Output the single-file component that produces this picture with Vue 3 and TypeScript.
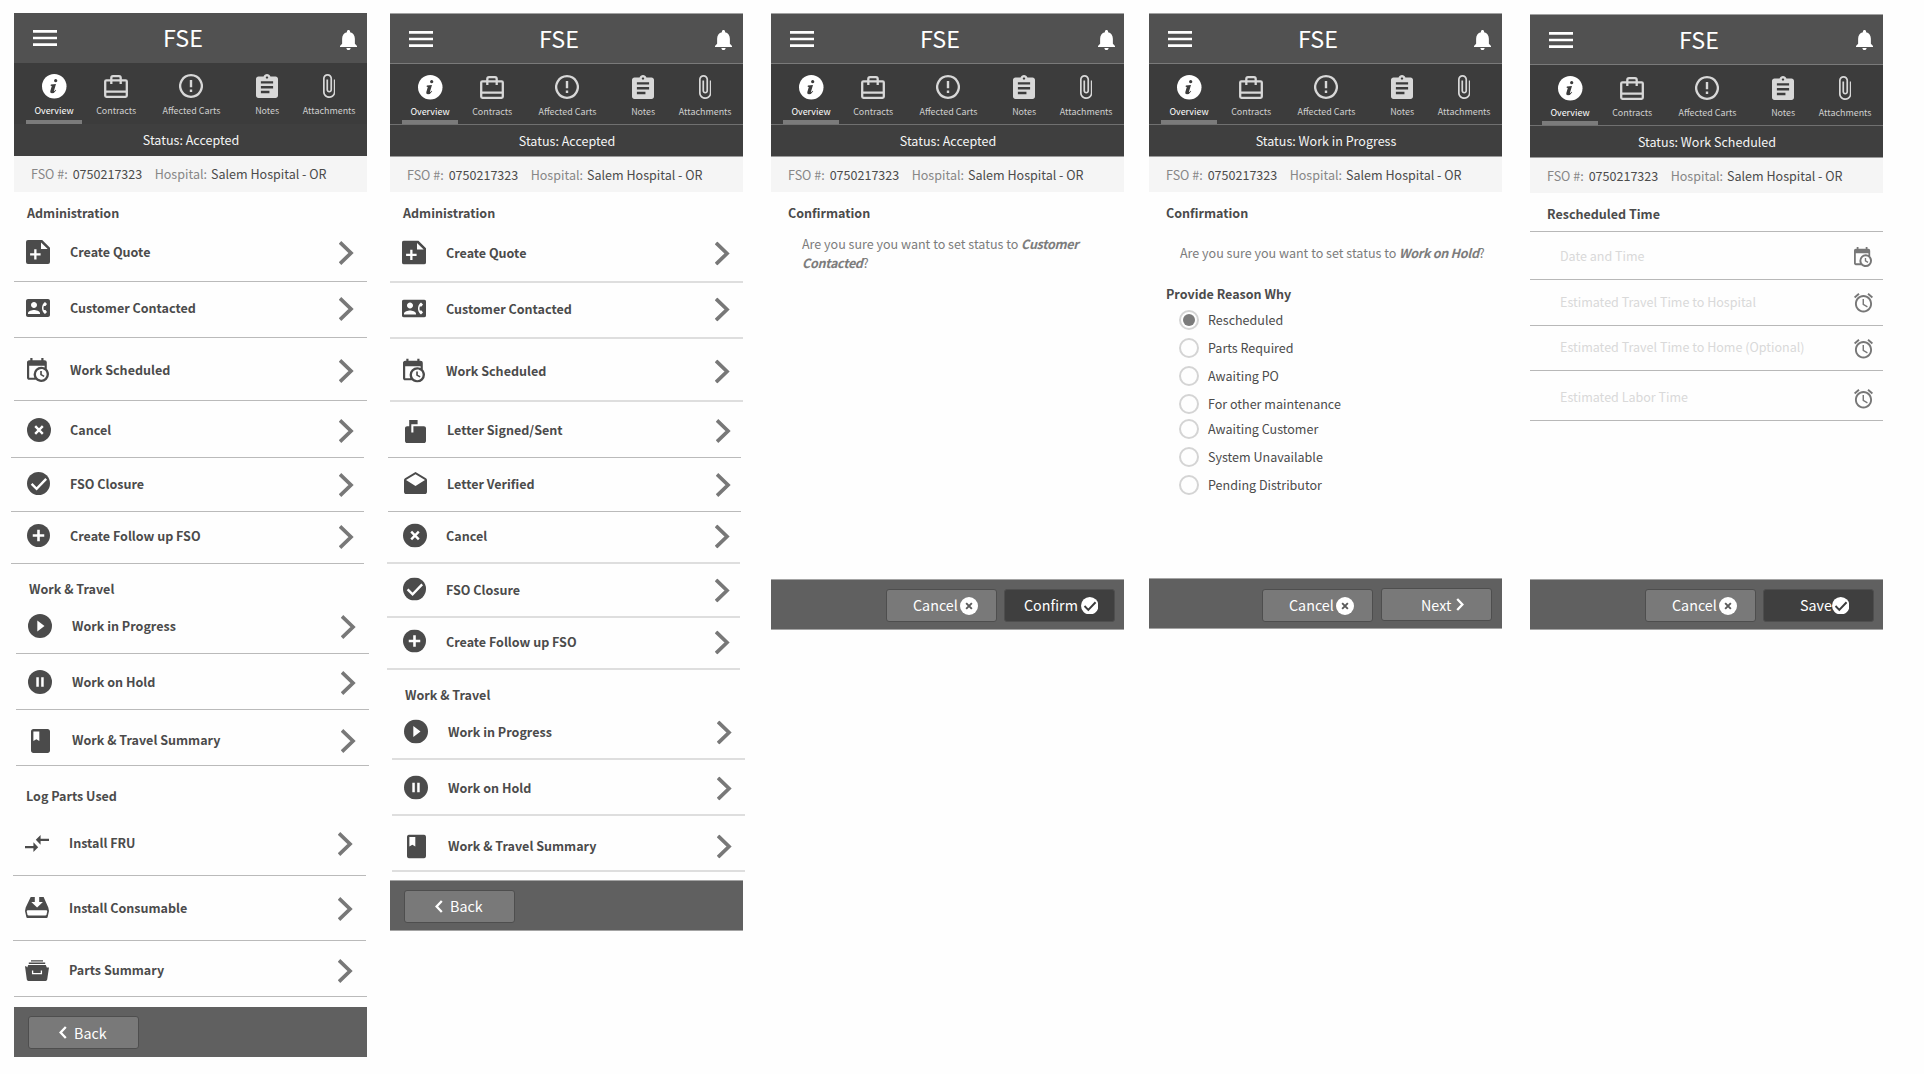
<script setup lang="ts">
interface Shape { d: string; f?: string; s?: string; w?: number }
interface Glyph { box: string; w: number; h: number; shapes: Shape[] }
interface Row {
  icon: string; label: string
  x: number; ix: number; iy: number
  pt: number; pb: number
  line: number; crisp?: boolean
}
interface Group { title: string; tx: number; ty: number; th: number; rows: Row[] }
interface Button {
  label: string; icon: string; side: 'left' | 'right'; dark?: boolean
  left: number; pad: number; gap: number; drop?: number; low?: boolean
}
interface Screen {
  kind: 'menu' | 'confirm' | 'reason' | 'form'
  gap: number; top: number; bell: number; sharp?: boolean
  status: string; bodyHeight: number
  groups?: Group[]; buttons: Button[]
}

const ink = '#4b4b4b'
const disc = 'M12 0a12 12 0 1 0 0 24a12 12 0 1 0 0-24z'

const glyphs: Record<string, Glyph> = {
  menu: { box: '0 0 24 16', w: 24, h: 16, shapes: [{ d: 'M0 0h24v2.7H0zM0 6.65h24v2.7H0zM0 13.3h24V16H0z', f: '#fff' }] },
  bell: { box: '4 2.5 16 19.5', w: 17, h: 20, shapes: [{ d: 'M12 22c1.1 0 2-.9 2-2h-4c0 1.1.89 2 2 2zm6-6v-5c0-3.07-1.64-5.64-4.5-6.32V4c0-.83-.67-1.5-1.5-1.5s-1.5.67-1.5 1.5v.68C7.63 5.36 6 7.92 6 11v5l-2 2v1h16v-1l-2-2z', f: '#fff' }] },
  info: { box: '0 0 24 24', w: 24.5, h: 24.5, shapes: [
    { d: disc, f: '#fff' },
    { d: 'M13.4 5a1.6 1.6 0 1 0 .01 0zM8.7 10.4l5-.7-2.1 7.1q.9-.1 1.8-1.3l.5.4q-1.8 3-4.2 3-2 0-1.6-2l1.5-5.2-1.2-.3z', f: '#3c3c3c' }] },
  contracts: { box: '0 0 24 23', w: 24, h: 23, shapes: [
    { d: 'M2.4 5.4H21.6Q22.8 5.4 22.8 6.6V20.6Q22.8 21.8 21.6 21.8H2.4Q1.2 21.8 1.2 20.6V6.6Q1.2 5.4 2.4 5.4zM1.2 16.6H22.8M7.3 9V3Q7.3 1.2 9 1.2H15Q16.7 1.2 16.7 3V9', s: '#d8d8d8', w: 2.3 }] },
  alert: { box: '0 0 24 24', w: 24, h: 24, shapes: [
    { d: 'M12 1.2a10.8 10.8 0 1 0 .01 0z', s: '#d8d8d8', w: 2.3 },
    { d: 'M10.8 6h2.4v7.2h-2.4zM10.8 15.6h2.4V18h-2.4z', f: '#d8d8d8' }] },
  notes: { box: '3 1 18 20', w: 22, h: 24, shapes: [{ d: 'M19 3h-4.18C14.4 1.84 13.3 1 12 1c-1.3 0-2.4.84-2.82 2H5c-1.1 0-2 .9-2 2v14c0 1.1.9 2 2 2h14c1.1 0 2-.9 2-2V5c0-1.1-.9-2-2-2zm-7 0c.55 0 1 .45 1 1s-.45 1-1 1-1-.45-1-1 .45-1 1-1zm2 14H7v-2h7v2zm3-4H7v-2h10v2zm0-4H7V7h10v2z', f: '#d8d8d8' }] },
  clip: { box: '7 1 11 22', w: 12.5, h: 24, shapes: [{ d: 'M16.5 6v11.5c0 2.21-1.79 4-4 4s-4-1.79-4-4V5c0-1.38 1.12-2.5 2.5-2.5s2.5 1.12 2.5 2.5v10.5c0 .55-.45 1-1 1s-1-.45-1-1V6H10v9.5c0 1.38 1.12 2.5 2.5 2.5s2.5-1.12 2.5-2.5V5c0-2.21-1.79-4-4-4S7 2.79 7 5v12.5c0 3.04 2.46 5.5 5.5 5.5s5.5-2.46 5.5-5.5V6h-1.5z', f: '#d8d8d8' }] },
  quote: { box: '0 0 24 24', w: 24, h: 24, shapes: [{ d: 'M2 0H16.2L24 7.8V22q0 2-2 2H2q-2 0-2-2V2q0-2 2-2zM15 2.4V9h6.7zM8.2 9.2V13.2H4.1V15.5H8.2V19.6H10.5V15.5H14.6V13.2H10.5V9.2z', f: ink }] },
  contact: { box: '0 3 24 18', w: 24, h: 18, shapes: [{ d: 'M22 3H2C.9 3 0 3.9 0 5v14c0 1.1.9 2 2 2h20c1.1 0 1.99-.9 1.99-2L24 5c0-1.1-.9-2-2-2zM8 6c1.66 0 3 1.34 3 3s-1.34 3-3 3-3-1.34-3-3 1.34-3 3-3zm6 12H2v-1c0-2 4-3.1 6-3.1s6 1.1 6 3.1v1zm3.85-4h1.64L21 16l-1.99 1.99c-1.31-.98-2.28-2.38-2.73-3.99-.18-.64-.28-1.31-.28-2s.1-1.36.28-2c.45-1.62 1.42-3.01 2.73-3.99L21 8l-1.51 2h-1.64c-.22.63-.35 1.3-.35 2s.13 1.37.35 2z', f: ink }] },
  schedule: { box: '3 1 20 22', w: 22, h: 24, shapes: [{ d: 'M15,13H16.5V15.82L18.94,17.23L18.19,18.53L15,16.69V13M19,8H5V19H9.67C9.24,18.09 9,17.07 9,16A7,7 0 0,1 16,9C17.07,9 18.09,9.24 19,9.67V8M5,21C3.89,21 3,20.1 3,19V5C3,3.89 3.89,3 5,3H6V1H8V3H16V1H18V3H19A2,2 0 0,1 21,5V11.1C22.24,12.36 23,14.09 23,16A7,7 0 0,1 16,23C14.09,23 12.36,22.24 11.1,21H5M16,11.15A4.85,4.85 0 0,0 11.15,16C11.15,18.68 13.32,20.85 16,20.85A4.85,4.85 0 0,0 20.85,16C20.85,13.32 18.68,11.15 16,11.15Z', f: 'currentColor' }] },
  cancel: { box: '0 0 24 24', w: 24, h: 24, shapes: [{ d: disc, f: ink }, { d: 'M8.2 8.2l7.6 7.6M15.8 8.2l-7.6 7.6', s: '#fff', w: 2.4 }] },
  check: { box: '0 0 24 24', w: 23, h: 23, shapes: [{ d: disc, f: ink }, { d: 'M4.8 12.4l5.2 5.2L20 7.2', s: '#fff', w: 2.5 }] },
  plus: { box: '0 0 24 24', w: 23, h: 23, shapes: [{ d: disc, f: ink }, { d: 'M6 12h12M12 6v12', s: '#fff', w: 2.7 }] },
  play: { box: '0 0 24 24', w: 24, h: 24, shapes: [{ d: disc, f: ink }, { d: 'M9.3 6.6v10.8l7.2-5.4z', f: '#fff' }] },
  pause: { box: '0 0 24 24', w: 24, h: 24, shapes: [{ d: disc, f: ink }, { d: 'M8.3 7.2h2.5v9.6H8.3zM13.2 7.2h2.5v9.6h-2.5z', f: '#fff' }] },
  book: { box: '4 2 16 20', w: 19, h: 24, shapes: [{ d: 'M18 2H6c-1.1 0-2 .9-2 2v16c0 1.1.9 2 2 2h12c1.1 0 2-.9 2-2V4c0-1.1-.9-2-2-2zM6 4h5v8l-2.5-1.5L6 12V4z', f: ink }] },
  compare: { box: '2 5 20 14', w: 24, h: 17, shapes: [{ d: 'M9.01 14H2v2h7.01v3L13 15l-3.99-4v3zm5.98-1v-3H22V8h-7.01V5L11 9l3.99 4z', f: ink }] },
  consumable: { box: '0 0 24 21', w: 24, h: 21, shapes: [
    { d: 'M5.7 0H9.8V4.9H6.3L12.1 10.6 17.9 4.9H14.2V0H18.6L23.3 10.5 24 14 22.6 20.2Q22.4 21 21.6 21H2.4Q1.6 21 1.4 20.2L0 14 .7 10.5z', f: ink },
    { d: 'M3 13.2H21Q22.4 13.2 22.2 14.6L21.6 17.2Q21.3 18.4 20.2 18.4H3.8Q2.7 18.4 2.4 17.2L1.8 14.6Q1.6 13.2 3 13.2z', f: '#fff' }] },
  parts: { box: '0 0 24 21', w: 24, h: 21, shapes: [
    { d: 'M6 .2H18V1.6H6zM3.8 2.6H20.2V4H3.8zM2.2 7.4L3.2 5H20.8L21.8 7.4H24L22.2 19.6Q22 21 20.6 21H3.4Q2 21 1.8 19.6L0 6.2H1.2z', f: ink },
    { d: 'M7.6 10.4V13.6H16.4V10.4', s: '#fff', w: 1.3 }] },
  mailbox: { box: '2 0 20 22', w: 21, h: 23, shapes: [{ d: 'M20 6H10v6H8V4h6V0H6v6H4c-1.1 0-2 .9-2 2v12c0 1.1.9 2 2 2h16c1.1 0 2-.9 2-2V8c0-1.1-.9-2-2-2z', f: ink }] },
  drafts: { box: '2 1 20 19', w: 23, h: 22, shapes: [{ d: 'M21.99 8c0-.72-.37-1.35-.94-1.7L12 1 2.95 6.3C2.38 6.65 2 7.28 2 8v10c0 1.1.9 2 2 2h16c1.1 0 2-.9 2-2l-.01-10zM12 13L3.74 7.84 12 3l8.26 4.84L12 13z', f: ink }] },
  next: { box: '0 0 15 24', w: 15, h: 24, shapes: [{ d: 'M1 1.4L12 12 1 22.6', s: '#787878', w: 3.7 }] },
  alarm: { box: '2 1.86 20 20.14', w: 19.5, h: 20, shapes: [{ d: 'M22 5.72l-4.6-3.86-1.29 1.53 4.6 3.86L22 5.72zM7.88 3.39L6.6 1.86 2 5.71l1.29 1.53 4.59-3.85zM12.5 8H11v6l4.75 2.85.75-1.23-4-2.37V8zM12 4c-4.97 0-9 4.03-9 9s4.02 9 9 9c4.97 0 9-4.03 9-9s-4.03-9-9-9zm0 16c-3.87 0-7-3.13-7-7s3.13-7 7-7 7 3.13 7 7-3.13 7-7 7z', f: '#777' }] },
  btnBack: { box: '0 0 8 13', w: 8, h: 13, shapes: [{ d: 'M6.8 1L1.6 6.5 6.8 12', s: '#fff', w: 2.3 }] },
  btnNext: { box: '0 0 8 13', w: 8, h: 13, shapes: [{ d: 'M1.2 1L6.4 6.5 1.2 12', s: '#fff', w: 2.3 }] },
  btnCancel: { box: '0 0 24 24', w: 18, h: 18, shapes: [{ d: disc, f: '#fff' }, { d: 'M8.2 8.2l7.6 7.6M15.8 8.2l-7.6 7.6', s: '#5a5a5a', w: 2.6 }] },
  btnCheck: { box: '0 0 24 24', w: 17.5, h: 17.5, shapes: [{ d: disc, f: '#fff' }, { d: 'M4.8 12.4l5.2 5.2L20 7.2', s: '#3c3c3c', w: 2.7 }] },
}

const tabs = [
  { label: 'Overview', icon: 'info', center: 39.8, iy: 11 },
  { label: 'Contracts', icon: 'contracts', center: 102, iy: 12 },
  { label: 'Affected Carts', icon: 'alert', center: 177.3, iy: 11 },
  { label: 'Notes', icon: 'notes', center: 253, iy: 11 },
  { label: 'Attachments', icon: 'clip', center: 315, iy: 11 },
]

const row = (icon: string, label: string, x: number, ix: number, iy: number, pt: number, pb: number, line: number, crisp = false): Row =>
  ({ icon, label, x, ix, iy, pt, pb, line, crisp })

const screens: Screen[] = [
  {
    kind: 'menu', gap: 14, top: 13, bell: 326, sharp: true, status: 'Accepted', bodyHeight: 815,
    groups: [
      { title: 'Administration', tx: 13, ty: 21, th: 40, rows: [
        row('quote', 'Create Quote', 56, 12, -1, 9, 16, 0),
        row('contact', 'Customer Contacted', 56, 12, 2, 15, 16, 0),
        row('schedule', 'Work Scheduled', 56, 13, -1, 21, 17, 0),
        row('cancel', 'Cancel', 56, 13, -1, 18, 14, -3),
        row('check', 'FSO Closure', 56, 13, -1, 15, 14, -3),
        row('plus', 'Create Follow up FSO', 56, 13, -1, 13, 14, -3),
      ] },
      { title: 'Work & Travel', tx: 15, ty: 25, th: 41, rows: [
        row('play', 'Work in Progress', 58, 14, -1, 10, 14, 2),
        row('pause', 'Work on Hold', 58, 14, -1, 17, 14, 2),
        row('book', 'Work & Travel Summary', 58, 17, 0, 19, 12, 2),
      ] },
      { title: 'Log Parts Used', tx: 12, ty: 30, th: 56, rows: [
        row('compare', 'Install FRU', 55, 11, 3, 10, 19, -1),
        row('consumable', 'Install Consumable', 55, 11, 0, 21, 19, -1),
        row('parts', 'Parts Summary', 55, 11, 1, 18, 13, 0),
      ] },
    ],
    buttons: [{ label: 'Back', icon: 'btnBack', side: 'left', left: 14, pad: 30, gap: 7, low: true }],
  },
  {
    kind: 'menu', gap: 23, top: 13, bell: 325, status: 'Accepted', bodyHeight: 688,
    groups: [
      { title: 'Administration', tx: 13, ty: 21, th: 40, rows: [
        row('quote', 'Create Quote', 56, 12, -1, 9, 16, 0),
        row('contact', 'Customer Contacted', 56, 12, 2, 14, 16, 0),
        row('schedule', 'Work Scheduled', 56, 13, -1, 20, 17, 0),
        row('mailbox', 'Letter Signed/Sent', 57, 15, 1, 17, 14, -2, true),
        row('drafts', 'Letter Verified', 57, 14, -1, 15, 14, -2, true),
        row('cancel', 'Cancel', 56, 13, -1, 12, 14, -3),
        row('check', 'FSO Closure', 56, 13, -1, 14, 14, -3),
        row('plus', 'Create Follow up FSO', 56, 13, -1, 12, 14, -3),
      ] },
      { title: 'Work & Travel', tx: 15, ty: 25, th: 40, rows: [
        row('play', 'Work in Progress', 58, 14, -1, 10, 14, 2),
        row('pause', 'Work on Hold', 58, 14, -1, 16, 14, 2),
        row('book', 'Work & Travel Summary', 58, 17, 0, 18, 12, 2),
      ] },
    ],
    buttons: [{ label: 'Back', icon: 'btnBack', side: 'left', left: 14, pad: 30, gap: 7 }],
  },
  {
    kind: 'confirm', gap: 28, top: 13, bell: 327, status: 'Accepted', bodyHeight: 387,
    buttons: [
      { label: 'Cancel', icon: 'btnCancel', side: 'right', left: 115, pad: 26, gap: 2 },
      { label: 'Confirm', icon: 'btnCheck', side: 'right', dark: true, left: 7, pad: 19, gap: 3 },
    ],
  },
  {
    kind: 'reason', gap: 25, top: 13, bell: 325, status: 'Work in Progress', bodyHeight: 386,
    buttons: [
      { label: 'Cancel', icon: 'btnCancel', side: 'right', left: 113, pad: 26, gap: 2, drop: 1 },
      { label: 'Next', icon: 'btnNext', side: 'right', left: 8, pad: 39, gap: 5, low: true },
    ],
  },
  {
    kind: 'form', gap: 28, top: 14, bell: 326, status: 'Work Scheduled', bodyHeight: 386,
    buttons: [
      { label: 'Cancel', icon: 'btnCancel', side: 'right', left: 115, pad: 26, gap: 2 },
      { label: 'Save', icon: 'btnCheck', side: 'right', dark: true, left: 7, pad: 36, gap: 0 },
    ],
  },
]

const reasons = [
  { label: 'Rescheduled', h: 28 },
  { label: 'Parts Required', h: 28 },
  { label: 'Awaiting PO', h: 28 },
  { label: 'For other maintenance', h: 25 },
  { label: 'Awaiting Customer', h: 28 },
  { label: 'System Unavailable', h: 28 },
  { label: 'Pending Distributor', h: 28 },
]

const fields = [
  { label: 'Date and Time', icon: 'schedule', h: 48, ty: 15, iy: 15 },
  { label: 'Estimated Travel Time to Hospital', icon: 'alarm', h: 46, ty: 13, iy: 13 },
  { label: 'Estimated Travel Time to Home (Optional)', icon: 'alarm', h: 45, ty: 12, iy: 13 },
  { label: 'Estimated Labor Time', icon: 'alarm', h: 50, ty: 17, iy: 18 },
]

const px = (n: number) => `${n}px`
</script>

<template>
  <main class="board">
    <section
      v-for="(s, i) in screens"
      :key="i"
      class="screen"
      :class="{ soft: !s.sharp }"
      :style="{ marginLeft: px(s.gap), marginTop: px(s.top) }"
    >
      <header class="bar">
        <svg class="menu" :viewBox="glyphs.menu.box" width="24" height="16">
          <path :d="glyphs.menu.shapes[0].d" fill="#fff" />
        </svg>
        <h1 class="title">FSE</h1>
        <svg
          class="bell"
          :style="{ marginRight: px(336 - s.bell), marginTop: px(30 - s.top - (s.sharp ? 0 : 1)) }"
          :viewBox="glyphs.bell.box"
          width="17"
          height="20"
          preserveAspectRatio="none"
        >
          <path :d="glyphs.bell.shapes[0].d" fill="#fff" />
        </svg>
      </header>

      <nav class="tabs">
        <div
          v-for="(t, ti) in tabs"
          :key="t.label"
          class="tab"
          :class="{ active: ti === 0 }"
          :style="{ width: px(ti === 0 ? 56 : 60), marginLeft: px(ti === 0 ? 12 : t.center - tabs[ti - 1].center - (ti === 1 ? 58 : 60)) }"
        >
          <svg
            :viewBox="glyphs[t.icon].box"
            :width="glyphs[t.icon].w"
            :height="glyphs[t.icon].h"
            :style="{ marginTop: px(t.iy) }"
            preserveAspectRatio="none"
          >
            <path v-for="(p, k) in glyphs[t.icon].shapes" :key="k" :d="p.d" :fill="p.f ?? 'none'" :stroke="p.s ?? 'none'" :stroke-width="p.w" fill-rule="evenodd" />
          </svg>
          <span>{{ t.label }}</span>
        </div>
      </nav>

      <div class="status">Status: {{ s.status }}</div>

      <dl class="info">
        <dt>FSO #:</dt>
        <dd class="number">0750217323</dd>
        <dt>Hospital:</dt>
        <dd class="place">Salem Hospital - OR</dd>
      </dl>

      <div class="body" :style="{ height: px(s.bodyHeight) }">
        <template v-if="s.kind === 'menu'">
          <div v-for="g in s.groups" :key="g.title" class="group">
            <h2 class="heading" :style="{ height: px(g.th), paddingTop: px(g.ty - 9), paddingLeft: px(g.tx) }">{{ g.title }}</h2>
            <div
              v-for="r in g.rows"
              :key="r.label"
              class="row"
              :class="{ crisp: r.crisp }"
              :style="{ paddingTop: px(r.pt), paddingBottom: px(r.pb), marginLeft: px(r.line) }"
            >
              <div class="icon" :style="{ width: px(r.x - r.ix), marginLeft: px(r.ix - r.line), marginTop: px(r.iy) }">
                <svg :viewBox="glyphs[r.icon].box" :width="glyphs[r.icon].w" :height="glyphs[r.icon].h" preserveAspectRatio="none">
                  <path v-for="(p, k) in glyphs[r.icon].shapes" :key="k" :d="p.d" :fill="p.f ?? 'none'" :stroke="p.s ?? 'none'" :stroke-width="p.w" fill-rule="evenodd" />
                </svg>
              </div>
              <span class="label">{{ r.label }}</span>
              <svg class="chevron" :style="{ marginRight: px(356 - r.x - 287 + r.line) }" viewBox="0 0 15 24" width="15" height="24">
                <path :d="glyphs.next.shapes[0].d" fill="none" stroke="#787878" stroke-width="3.7" />
              </svg>
            </div>
          </div>
        </template>

        <template v-else-if="s.kind === 'confirm'">
          <h2 class="heading question-title">Confirmation</h2>
          <p class="question">Are you sure you want to set status to <em>Customer Contacted</em>?</p>
        </template>

        <template v-else-if="s.kind === 'reason'">
          <h2 class="heading question-title">Confirmation</h2>
          <p class="question single">Are you sure you want to set status to <em>Work on Hold</em>?</p>
          <h2 class="heading reason-title">Provide Reason Why</h2>
          <ul class="reasons">
            <li v-for="(r, k) in reasons" :key="r.label" :style="{ height: px(r.h) }">
              <i class="radio" :class="{ on: k === 0 }"></i>
              <span>{{ r.label }}</span>
            </li>
          </ul>
        </template>

        <template v-else>
          <h2 class="heading form-title">Rescheduled Time</h2>
          <div v-for="f in fields" :key="f.label" class="field" :style="{ height: px(f.h) }">
            <span :style="{ marginTop: px(f.ty) }">{{ f.label }}</span>
            <svg
              :viewBox="glyphs[f.icon].box"
              :width="f.icon === 'alarm' ? 19 : 18"
              :height="f.icon === 'alarm' ? 19.5 : 20"
              :style="{ marginTop: px(f.iy), marginRight: px(f.icon === 'alarm' ? 10 : 11) }"
              preserveAspectRatio="none"
            >
              <path :d="glyphs[f.icon].shapes[0].d" fill="#777" fill-rule="evenodd" />
            </svg>
          </div>
        </template>
      </div>

      <footer class="actions">
        <button
          v-for="b in s.buttons"
          :key="b.label"
          type="button"
          class="btn"
          :class="{ dark: b.dark, reverse: b.side === 'left', low: b.low }"
          :style="{ marginLeft: px(b.left), marginTop: px(b.drop ?? 0), paddingLeft: px(b.pad), gap: px(b.gap) }"
        >
          <span>{{ b.label }}</span>
          <svg :viewBox="glyphs[b.icon].box" :width="glyphs[b.icon].w" :height="glyphs[b.icon].h">
            <path v-for="(p, k) in glyphs[b.icon].shapes" :key="k" :d="p.d" :fill="p.f ?? 'none'" :stroke="p.s ?? 'none'" :stroke-width="p.w" />
          </svg>
        </button>
      </footer>
    </section>
  </main>
</template>

<style>
body {
  background: #fefefe;
}
</style>

<style scoped>
.board {
  display: flex;
  align-items: flex-start;
  width: 1924px;
  height: 1074px;
  overflow: hidden;
  font-family: "Noto Sans CJK SC", "Noto Sans CJK JP", sans-serif;
  font-size: 12.54px;
  line-height: 18px;
  color: #4b4b4b;
}
.board * {
  box-sizing: border-box;
}
svg {
  display: block;
  flex: none;
}
.screen {
  width: 353px;
  flex: none;
}
.bar {
  display: flex;
  align-items: flex-start;
  height: 50px;
  background: #515151;
  color: #fff;
}
.menu {
  margin: 17px 0 0 19px;
}
.title {
  flex: 1;
  margin: 7px 0 0 106px;
  font-size: 23.3px;
  line-height: 34px;
  font-weight: 400;
}
.tabs {
  display: flex;
  height: 61px;
  background: #3c3c3c;
  color: #cfcfcf;
  font-size: 8.95px;
}
.tab {
  display: flex;
  flex-direction: column;
  align-items: center;
  flex: none;
  height: 61px;
  white-space: nowrap;
}
.tab span {
  margin-top: auto;
  height: 22px;
  line-height: 18px;
}
.tab.active {
  border-bottom: 4px solid #7b7b7b;
  color: #fff;
}
.tab.active span {
  height: 18px;
}
.tab.active svg {
  margin-left: 1px;
}
.status {
  height: 32px;
  padding: 7px 0 0 1px;
  background: #3f3f3f;
  color: #f4f4f4;
  text-align: center;
}
.info {
  display: flex;
  height: 36px;
  margin: 0;
  padding: 9px 0 0 17px;
  background: #f5f5f5;
  white-space: nowrap;
}
.info dt {
  color: #878787;
}
.info dd {
  margin: 0 0 0 5px;
}
.info .number {
  width: 82px;
}
.info .place {
  margin-left: 4px;
}
.body {
  overflow: visible;
}
.heading {
  margin: 0;
  font-size: 12.54px;
  font-weight: 700;
  line-height: 18px;
}
.row {
  display: flex;
  align-items: flex-start;
  width: 353px;
  border-bottom: 1px solid #bababa;
  white-space: nowrap;
}
.row .icon {
  flex: none;
  height: 24px;
  margin-bottom: -6px;
}
.label {
  flex: 1;
  height: 24px;
  padding-top: 2px;
  font-weight: 700;
}
.soft .row:not(.crisp) {
  border-bottom: 2px solid #dedede;
}
.soft .row:not(.crisp) .label {
  padding-top: 3px;
}
.soft .row:not(.crisp) svg {
  transform: translateY(0.5px);
}
.soft .bar {
  border-top: 1px solid #a2a2a2;
}
.soft .tabs {
  border-top: 1px solid #7a7a7a;
}
.soft .tab {
  height: 60px;
}
.soft .tab span {
  height: 21px;
}
.soft .tab.active span {
  height: 17px;
}
.soft .status {
  border-top: 1px solid #707070;
}
.soft .info {
  border-top: 1px solid #9a9a9a;
}
.question-title {
  padding: 12px 0 0 17px;
}
.question {
  width: 290px;
  margin: 12px 0 0 31px;
  line-height: 19px;
  color: #7c7c7c;
}
.question em {
  font-weight: 700;
  font-style: italic;
  letter-spacing: -0.3px;
}
.question.single {
  margin-top: 21px;
  width: 320px;
}
.reason-title {
  padding: 23px 0 0 17px;
}
.reasons {
  margin: 7px 0 0;
  padding: 0;
  list-style: none;
}
.reasons li {
  display: flex;
  padding-left: 30px;
}
.reasons span {
  padding-top: 1px;
}
.radio {
  display: flex;
  width: 20px;
  height: 20px;
  margin-right: 9px;
  border: 2px solid #d4d4d4;
  border-radius: 50%;
}
.radio.on::after {
  content: "";
  width: 12px;
  height: 12px;
  margin: 2px;
  border-radius: 50%;
  background: #7b7b7b;
}
.form-title {
  height: 39px;
  padding: 12px 0 0 17px;
  border-bottom: 1px solid #b8b8b8;
}
.field {
  display: flex;
  justify-content: space-between;
  align-items: flex-start;
  padding-left: 30px;
  border-bottom: 1px solid #b8b8b8;
  color: #d9d9d9;
}
.actions {
  display: flex;
  align-items: flex-start;
  height: 50px;
  padding-top: 9px;
  background: #606060;
}
.soft .actions {
  height: 51px;
  border-top: 1px solid #a4a4a4;
  border-bottom: 1px solid #a4a4a4;
}
.btn {
  display: flex;
  align-items: center;
  width: 111px;
  height: 33px;
  padding: 0;
  border: 1px solid #4e4e4e;
  border-radius: 3px;
  background: #797979;
  color: #fff;
  font: 400 14.3px/20px "Noto Sans CJK SC", "Noto Sans CJK JP", sans-serif;
}
.btn span {
  margin-top: -1px;
}
.btn.low span {
  margin-top: 1px;
}
.btn.dark {
  background: #3f3f3f;
}
.btn.reverse {
  flex-direction: row-reverse;
  justify-content: flex-end;
}
</style>
